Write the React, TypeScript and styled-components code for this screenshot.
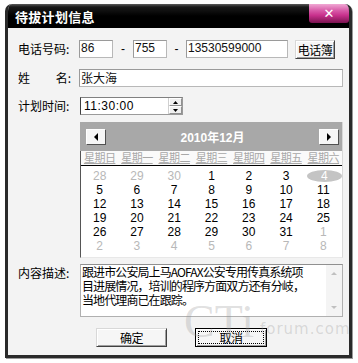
import styled, { createGlobalStyle } from "styled-components";

const GlobalStyle = createGlobalStyle`
  html, body {
    margin: 0;
    padding: 0;
    background: #ffffff;
  }
  body {
    font-family: "Noto Sans CJK SC", "Liberation Sans", sans-serif;
    font-size: 12px;
    color: #000;
  }
`;

const Page = styled.div`
  width: 358px;
  height: 363px;
  padding: 4px 0 0 5px;
  box-sizing: border-box;
`;

const Window = styled.div`
  position: relative;
  width: 347px;
  height: 354px;
  box-sizing: border-box;
  border: 3px solid #2a2a2a;
  border-top: none;
  border-radius: 7px 7px 0 0;
  background: #f3f3f3;
  display: flex;
  flex-direction: column;
  overflow: hidden;
  box-shadow: 1px 1px 0 #9a9a9a;
`;

const TitleBar = styled.div`
  height: 24px;
  margin: 0 -3px;
  flex-shrink: 0;
  background: linear-gradient(#5a5a5a 0px, #1a1a1a 3px, #000 12px, #000 100%);
  display: flex;
  align-items: center;
  justify-content: space-between;
  padding-left: 10px;
`;

const Title = styled.span`
  color: #fff;
  font-weight: 700;
  font-size: 13px;
  letter-spacing: 0.3px;
  margin-top: 1px;
`;

const Close = styled.div`
  align-self: flex-start;
  width: 40px;
  height: 19px;
  margin-right: 3px;
  background: linear-gradient(#f0a8d4, #d85aa8 35%, #c8308c 60%, #7a1450);
  border-radius: 0 0 3px 3px;
  display: flex;
  align-items: center;
  justify-content: center;
  color: #fff;
  font-family: "DejaVu Sans", sans-serif;
  font-weight: 700;
  font-size: 13px;
  line-height: 1;
`;

const Body = styled.div`
  flex: 1;
  padding: 12px 5px 0 10px;
  display: flex;
  flex-direction: column;
`;

const Row = styled.div<{ $mt?: number }>`
  display: flex;
  align-items: flex-start;
  margin-top: ${(p) => p.$mt ?? 0}px;
`;

const Label = styled.div`
  width: 61px;
  flex-shrink: 0;
  height: 18px;
  line-height: 18px;
  font-size: 12px;
  white-space: nowrap;
  display: flex;
  justify-content: space-between;
  padding-right: 8px;
  box-sizing: border-box;
`;

const Field = styled.div<{ $w: number; $cjk?: boolean }>`
  width: ${(p) => p.$w}px;
  height: 18px;
  box-sizing: border-box;
  background: #fff;
  border: 1px solid #b8b8b8;
  border-top-color: #9a9a9a;
  border-left-color: #9a9a9a;
  font-family: ${(p) =>
    p.$cjk ? '"Noto Sans CJK SC", sans-serif' : '"Liberation Sans", sans-serif'};
  font-size: 12px;
  line-height: 15px;
  padding-left: 1px;
  color: #111;
  white-space: nowrap;
  overflow: hidden;
`;

const Dash = styled.div<{ $w: number }>`
  width: ${(p) => p.$w}px;
  text-align: center;
  line-height: 18px;
  font-family: "Liberation Sans", sans-serif;
`;

const Spacer = styled.div<{ $w: number }>`
  width: ${(p) => p.$w}px;
  flex-shrink: 0;
`;

const Button = styled.div<{ $w: number; $focus?: boolean }>`
  width: ${(p) => p.$w}px;
  height: 19px;
  flex-shrink: 0;
  box-sizing: border-box;
  background: #f6f6f6;
  border: 1px solid;
  border-color: ${(p) => (p.$focus ? "#000" : "#d8d8d8 #404040 #404040 #d8d8d8")};
  box-shadow: inset 1px 1px 0 #fff, inset -1px -1px 0 #a0a0a0;
  display: flex;
  align-items: center;
  justify-content: center;
  font-size: 12px;
  line-height: 1;
  letter-spacing: -0.5px;
  white-space: nowrap;
  position: relative;
  &::after {
    content: "";
    display: ${(p) => (p.$focus ? "block" : "none")};
    position: absolute;
    inset: 2px;
    border: 1px dotted #000;
  }
`;

const TimeBox = styled.div`
  margin-left: 1px;
  width: 103px;
  height: 18px;
  box-sizing: border-box;
  background: #fff;
  border: 1px solid #9a9a9a;
  border-left-color: #404040;
  border-top-color: #808080;
  display: flex;
  font-family: "Liberation Sans", sans-serif;
  font-size: 12px;
`;

const TimeText = styled.div`
  flex: 1;
  line-height: 16px;
  padding-left: 3px;
  letter-spacing: 0.5px;
`;

const Spin = styled.div`
  width: 13px;
  display: flex;
  flex-direction: column;
  border-left: 1px solid #d0d0d0;
`;

const SpinHalf = styled.div`
  flex: 1;
  background: #f0f0f0;
  border: 1px solid;
  border-color: #fff #909090 #909090 #fff;
  display: flex;
  align-items: center;
  justify-content: center;
`;

const Calendar = styled.div`
  margin: 7px 0 0 62px;
  width: 263px;
  height: 136px;
  box-sizing: border-box;
  background: #fff;
  border-left: 1px solid #555;
  border-right: 1px solid #d8d8d8;
  border-bottom: 1px solid #e8e8e8;
  display: flex;
  flex-direction: column;
`;

const CalHead = styled.div`
  height: 29px;
  background: #a8a8a8;
  margin-left: -1px;
  display: flex;
  align-items: center;
  justify-content: space-between;
  padding: 0 3px 0 6px;
`;

const NavButton = styled.div`
  width: 20px;
  height: 16px;
  box-sizing: border-box;
  background: #f6f6f6;
  border: 1px solid;
  border-color: #fff #505050 #505050 #fff;
  display: flex;
  align-items: center;
  justify-content: center;
  margin-top: 1px;
`;

const MonthTitle = styled.div`
  color: #fff;
  font-weight: 700;
  font-size: 12px;
  font-family: "Liberation Sans", "Noto Sans CJK SC", sans-serif;
`;

const Grid = styled.div`
  display: grid;
  grid-template-columns: repeat(7, 1fr);
`;

const WeekDays = styled(Grid)`
  height: 14px;
  background: #fafafa;
  border-bottom: 1px solid #000;
  margin: 0 0 3px 0;
`;

const WeekDay = styled.div`
  color: #a8a8a8;
  font-size: 11px;
  line-height: 13px;
  text-align: center;
  text-decoration: underline;
  white-space: nowrap;
  letter-spacing: -0.5px;
`;

const Day = styled.div<{ $muted?: boolean; $today?: boolean }>`
  text-align: center;
  font-family: "Liberation Sans", sans-serif;
  font-size: 12px;
  color: ${(p) => (p.$today ? "#fff" : p.$muted ? "#b8b8b8" : "#000")};
  background: ${(p) => (p.$today ? "#c4c4c4" : "transparent")};
  border-radius: ${(p) => (p.$today ? "50%" : "0")};
  margin: ${(p) => (p.$today ? "1px 0 1px 2px" : "0")};
  line-height: ${(p) => (p.$today ? "12px" : "14px")};
  height: ${(p) => (p.$today ? "12px" : "14px")};
`;

const DescBox = styled.div`
  margin-left: 1px;
  width: 263px;
  height: 53px;
  box-sizing: border-box;
  background: #fff;
  border: 1px solid #b0b0b0;
  border-top-color: #909090;
  display: flex;
`;

const DescText = styled.div`
  flex: 1;
  font-size: 12px;
  line-height: 14px;
  padding: 0 0 0 1px;
  white-space: nowrap;
  letter-spacing: -0.9px;
`;

const ScrollBar = styled.div`
  width: 16px;
  flex-shrink: 0;
  background: #f4f4f4;
  display: flex;
  flex-direction: column;
  justify-content: space-between;
  align-items: center;
  padding: 7px 0;
  box-sizing: border-box;
`;

const Footer = styled.div`
  display: flex;
  gap: 28px;
  margin: 11px 0 0 78px;
`;

const Watermark = styled.div`
  position: absolute;
  left: 176px;
  top: 296px;
  width: 165px;
  display: flex;
  align-items: flex-end;
  white-space: nowrap;
  pointer-events: none;
  color: rgba(150, 150, 150, 0.3);
`;

const WmBig = styled.span`
  font-family: "Liberation Serif", serif;
  font-size: 46px;
  line-height: 44px;
`;

const WmSmall = styled.span`
  font-family: "DejaVu Sans", sans-serif;
  font-size: 15px;
  margin-left: 6px;
  margin-bottom: 6px;
  letter-spacing: 1px;
`;

const Arrow = ({ dir, color, w, h }: { dir: "l" | "r" | "u" | "d"; color: string; w: number; h: number }) => {
  const d = {
    l: `M${w} 0 L0 ${h / 2} L${w} ${h} Z`,
    r: `M0 0 L${w} ${h / 2} L0 ${h} Z`,
    u: `M0 ${h} L${w / 2} 0 L${w} ${h} Z`,
    d: `M0 0 L${w / 2} ${h} L${w} 0 Z`,
  }[dir];
  return (
    <svg width={w} height={h} viewBox={`0 0 ${w} ${h}`}>
      <path d={d} fill={color} />
    </svg>
  );
};

const weekDays = ["星期日", "星期一", "星期二", "星期三", "星期四", "星期五", "星期六"];

type D = { n: number; muted?: boolean; today?: boolean };

const days: D[] = [
  { n: 28, muted: true },
  { n: 29, muted: true },
  { n: 30, muted: true },
  ...Array.from({ length: 31 }, (_, i) => ({ n: i + 1, today: i === 3 })),
  ...Array.from({ length: 8 }, (_, i) => ({ n: i + 1, muted: true })),
];

export default function App() {
  return (
    <Page>
      <GlobalStyle />
      <Window>
        <TitleBar>
          <Title>待拔计划信息</Title>
          <Close>✕</Close>
        </TitleBar>
        <Body>
          <Row>
            <Label>电话号码:</Label>
            <Field $w={34}>86</Field>
            <Dash $w={20}>-</Dash>
            <Field $w={34}>755</Field>
            <Dash $w={19}>-</Dash>
            <Field $w={102}>13530599000</Field>
            <Spacer $w={7} />
            <Button $w={40}>电话簿</Button>
          </Row>
          <Row $mt={10}>
            <Label>
              <span>姓</span>
              <span>名:</span>
            </Label>
            <Field $w={264} $cjk>
              张大海
            </Field>
          </Row>
          <Row $mt={10}>
            <Label>计划时间:</Label>
            <TimeBox>
              <TimeText>11:30:00</TimeText>
              <Spin>
                <SpinHalf>
                  <Arrow dir="u" color="#000" w={5} h={3} />
                </SpinHalf>
                <SpinHalf>
                  <Arrow dir="d" color="#000" w={5} h={3} />
                </SpinHalf>
              </Spin>
            </TimeBox>
          </Row>
          <Calendar>
            <CalHead>
              <NavButton>
                <Arrow dir="l" color="#000" w={4} h={8} />
              </NavButton>
              <MonthTitle>2010年12月</MonthTitle>
              <NavButton>
                <Arrow dir="r" color="#000" w={4} h={8} />
              </NavButton>
            </CalHead>
            <WeekDays>
              {weekDays.map((w) => (
                <WeekDay key={w}>{w}</WeekDay>
              ))}
            </WeekDays>
            <Grid>
              {days.map((d, i) => (
                <Day key={i} $muted={d.muted} $today={d.today}>
                  {d.n}
                </Day>
              ))}
            </Grid>
          </Calendar>
          <Row $mt={6}>
            <Label>内容描述:</Label>
            <DescBox>
              <DescText>
                跟进市公安局上马AOFAX公安专用传真系统项
                <br />
                目进展情况，培训的程序方面双方还有分岐，
                <br />
                当地代理商已在跟踪。
              </DescText>
              <ScrollBar>
                <Arrow dir="u" color="#c0c0c0" w={6} h={3} />
                <Arrow dir="d" color="#c0c0c0" w={6} h={3} />
              </ScrollBar>
            </DescBox>
          </Row>
          <Footer>
            <Button $w={71}>确定</Button>
            <Button $w={72} $focus>
              取消
            </Button>
          </Footer>
        </Body>
        <Watermark>
          <WmBig>CTi</WmBig>
          <WmSmall>forum.com</WmSmall>
        </Watermark>
      </Window>
    </Page>
  );
}
